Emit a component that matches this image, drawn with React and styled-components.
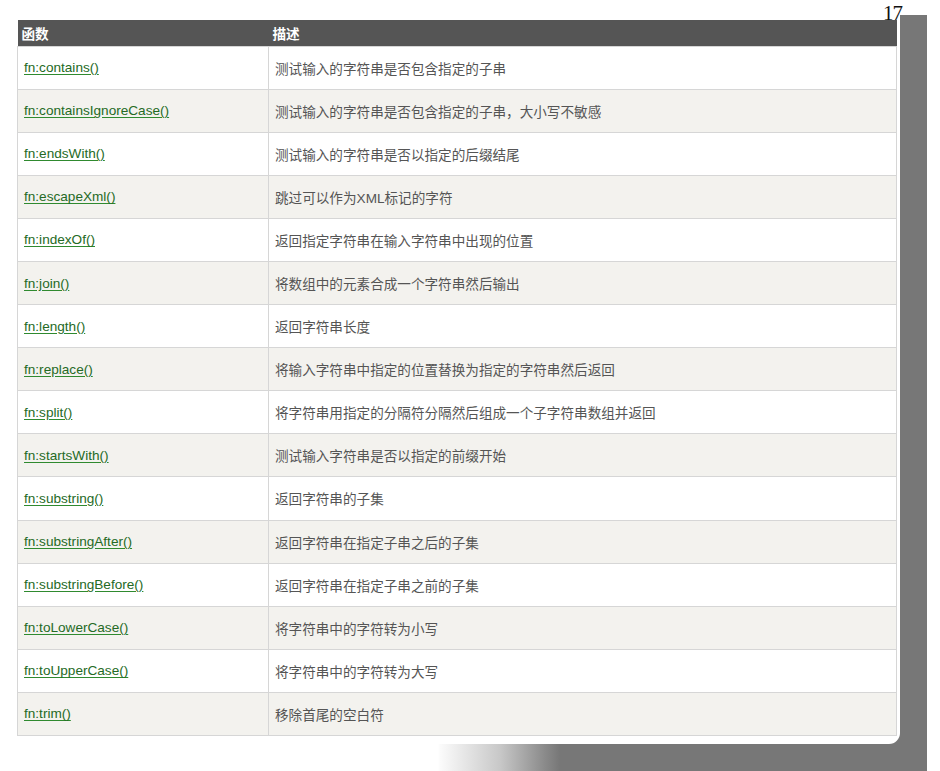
import React from 'react';
import styled, { createGlobalStyle } from 'styled-components';

const GlobalStyle = createGlobalStyle`
  html, body {
    margin: 0;
    padding: 0;
    background: #ffffff;
  }
`;

const rows = [
  ['fn:contains()', '测试输入的字符串是否包含指定的子串'],
  ['fn:containsIgnoreCase()', '测试输入的字符串是否包含指定的子串，大小写不敏感'],
  ['fn:endsWith()', '测试输入的字符串是否以指定的后缀结尾'],
  ['fn:escapeXml()', '跳过可以作为XML标记的字符'],
  ['fn:indexOf()', '返回指定字符串在输入字符串中出现的位置'],
  ['fn:join()', '将数组中的元素合成一个字符串然后输出'],
  ['fn:length()', '返回字符串长度'],
  ['fn:replace()', '将输入字符串中指定的位置替换为指定的字符串然后返回'],
  ['fn:split()', '将字符串用指定的分隔符分隔然后组成一个子字符串数组并返回'],
  ['fn:startsWith()', '测试输入字符串是否以指定的前缀开始'],
  ['fn:substring()', '返回字符串的子集'],
  ['fn:substringAfter()', '返回字符串在指定子串之后的子集'],
  ['fn:substringBefore()', '返回字符串在指定子串之前的子集'],
  ['fn:toLowerCase()', '将字符串中的字符转为小写'],
  ['fn:toUpperCase()', '将字符串中的字符转为大写'],
  ['fn:trim()', '移除首尾的空白符'],
];

const Page = styled.div`
  position: relative;
  width: 927px;
  font-family: 'Liberation Sans', Arial, 'Noto Sans CJK SC', sans-serif;
`;

const SlideRow = styled.div`
  display: flex;
  background: linear-gradient(#777777, #777777) right bottom / 40px 14px no-repeat;
`;

const Card = styled.div`
  width: 900px;
  box-sizing: border-box;
  padding: 20px 3px 8px 17px;
  background: #ffffff;
  border-bottom-right-radius: 11px;
`;

const SideShadow = styled.div`
  width: 27px;
  margin-top: 15px;
  background: #777777;
`;

const BottomShadow = styled.div`
  height: 27px;
  background: linear-gradient(to right, #ffffff 438px, #fbfbfb 440px, #c8c8c8 500px, #8a8a8a 545px, #777777 560px);
`;

const PageNumber = styled.div`
  position: absolute;
  top: 1px;
  left: 883px;
  font-family: 'Liberation Serif', 'Times New Roman', serif;
  font-size: 21px;
  line-height: 24px;
  color: #111111;
  letter-spacing: -1px;
`;

const Table = styled.table`
  width: 880px;
  border-collapse: collapse;
  table-layout: fixed;
  font-size: 13.6px;
`;

const HeadCell = styled.th`
  height: 26px;
  padding: 0 0 0 4px;
  background: #555555;
  color: #ffffff;
  font-weight: bold;
  text-align: left;
  font-family: 'Liberation Sans', 'Noto Sans CJK SC', sans-serif;
  width: ${(p) => p.width || 'auto'};
  box-sizing: border-box;
`;

const Row = styled.tr`
  background: ${(p) => (p.alt ? '#f3f2ee' : '#ffffff')};
`;

const Cell = styled.td`
  height: 42.1px;
  padding: 0 0 0 6px;
  border: 1px solid #d6d6d6;
  color: #555555;
  vertical-align: middle;
  font-family: 'Liberation Sans', 'Noto Sans CJK SC', sans-serif;
`;

const FnLink = styled.a`
  color: #256a25;
  text-decoration: underline;
  text-decoration-color: #2f8a2f;
  text-underline-offset: 2px;
  cursor: pointer;
`;

export default function App() {
  return (
    <>
      <GlobalStyle />
      <Page>
        <SlideRow>
          <Card>
            <Table>
              <thead>
                <tr>
                  <HeadCell width="251px">函数</HeadCell>
                  <HeadCell>描述</HeadCell>
                </tr>
              </thead>
              <tbody>
                {rows.map(([fn, desc], i) => (
                  <Row key={fn} alt={i % 2 === 1}>
                    <Cell>
                      <FnLink>{fn}</FnLink>
                    </Cell>
                    <Cell>{desc}</Cell>
                  </Row>
                ))}
              </tbody>
            </Table>
          </Card>
          <SideShadow />
        </SlideRow>
        <BottomShadow />
        <PageNumber>17</PageNumber>
      </Page>
    </>
  );
}
